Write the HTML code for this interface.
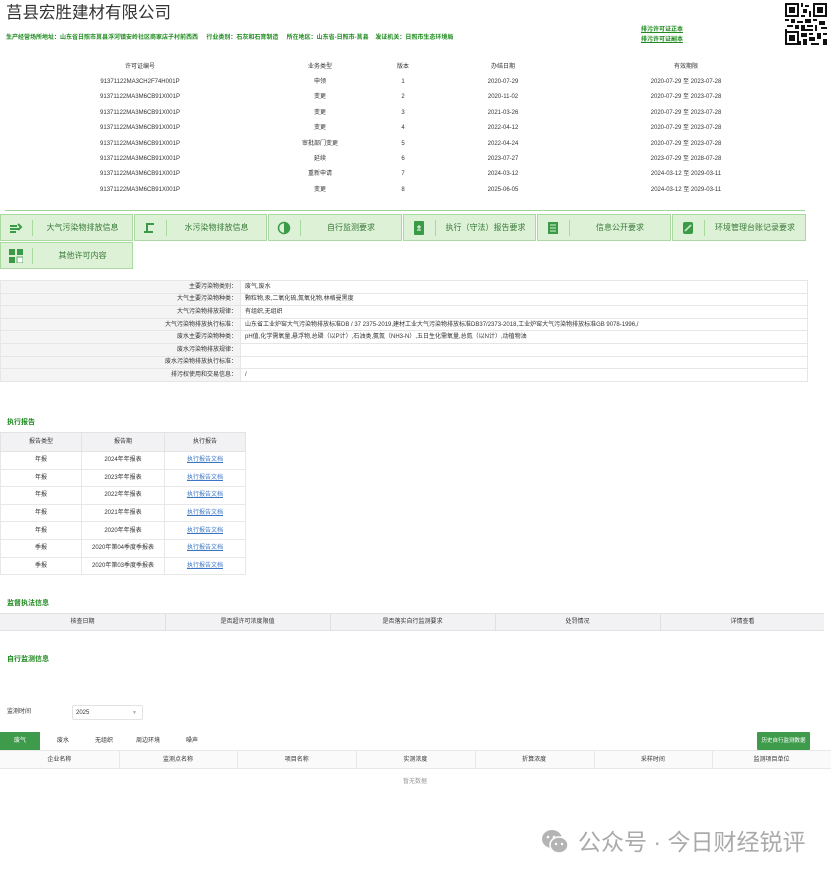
<!DOCTYPE html>
<html><head><meta charset="utf-8">
<style>
*{margin:0;padding:0;box-sizing:border-box}
body{width:831px;height:874px;background:#fff;position:relative;overflow:hidden;font-family:"Liberation Sans","Noto Sans CJK SC",sans-serif;color:#333;font-size:6px}
.a{position:absolute;white-space:nowrap;line-height:8px}
.c{text-align:center}
.g{color:#1f8a1f}
.btn{position:absolute;height:27px;background:#dcf1d6;border:1px solid #a9d9a0;color:#3a7a3a;font-size:8px}
.btn .ic{position:absolute;left:8px;top:6px;width:14px;height:14px}
.btn .dv{position:absolute;left:31px;top:5px;width:1px;height:16px;background:#a9d9a0}
.btn .t{position:absolute;left:32px;right:0;top:0;line-height:25px;text-align:center}
table{border-collapse:collapse;position:absolute}
td{font-size:6px;line-height:8px}
</style></head><body>
<div class="a" style="left:6px;top:3px;font-size:16.5px;line-height:20px;color:#333">莒县宏胜建材有限公司</div>
<div class="a g" style="left:6px;top:34px;font-size:6px;font-weight:bold">生产经营场所地址：山东省日照市莒县浮河镇安岭社区商家店子村前西西&nbsp;&nbsp;&nbsp;&nbsp;&nbsp;行业类别：石灰和石膏制造&nbsp;&nbsp;&nbsp;&nbsp;&nbsp;所在地区：山东省-日照市-莒县&nbsp;&nbsp;&nbsp;&nbsp;发证机关：日照市生态环境局</div>
<div class="a g" style="left:641px;top:26px;font-size:6px;font-weight:bold;text-decoration:underline">排污许可证正本</div>
<div class="a g" style="left:641px;top:36px;font-size:6px;font-weight:bold;text-decoration:underline">排污许可证副本</div>
<svg class="a" style="left:785px;top:3px" width="42" height="42" viewBox="0 0 21 21">
<rect width="21" height="21" fill="#fff"/>
<g fill="#111"><path d="M0 0h7v7H0zM14 0h7v7h-7zM0 14h7v7H0z"/></g>
<g fill="#fff"><path d="M1 1h5v5H1zM15 1h5v5h-5zM1 15h5v5H1z"/></g>
<g fill="#111"><path d="M2 2h3v3H2zM16 2h3v3h-3zM2 16h3v3H2z"/>
<path d="M8 0h1v2H8zM10 1h2v1h-2zM9 3h2v2H9zM12 4h1v3h-1zM8 6h2v1H8zM0 8h2v1H0zM3 8h2v2H3zM6 9h3v1H6zM10 8h3v2h-3zM14 8h2v1h-2zM17 9h3v2h-3zM1 11h3v1H1zM5 11h2v2H5zM8 11h2v3H8zM11 11h3v1h-3zM15 11h1v3h-1zM18 12h3v1h-3zM0 13h1v1H0zM10 13h4v1h-4zM8 15h3v2H8zM12 15h2v1h-2zM16 15h2v3h-2zM19 15h2v1h-2zM9 18h2v3H9zM12 17h3v2h-3zM19 18h2v3h-2zM13 20h4v1h-4zM7 19h1v2H7z"/></g>
</svg>

<div class="a c" style="left:90px;top:63px;width:100px">许可证编号</div>
<div class="a c" style="left:290px;top:63px;width:60px">业务类型</div>
<div class="a c" style="left:383px;top:63px;width:40px">版本</div>
<div class="a c" style="left:463px;top:63px;width:80px">办结日期</div>
<div class="a c" style="left:626px;top:63px;width:120px">有效期限</div>
<div id="rows"></div>

<div class="a" style="left:5px;top:210px;width:800px;height:1px;background:#9fd49a"></div>

<div class="btn" style="left:0;top:214px;width:133px"><svg class="ic" viewBox="0 0 14 14"><path d="M1 5h7M1 8h9M1 11h6M9 3l3 3-3 3" stroke="#3a9a48" stroke-width="2" fill="none"/></svg><div class="dv"></div><div class="t">大气污染物排放信息</div></div>
<div class="btn" style="left:134px;top:214px;width:133px"><svg class="ic" viewBox="0 0 14 14"><path d="M4 11V3h7M1 11h9" stroke="#3a9a48" stroke-width="2" fill="none"/></svg><div class="dv"></div><div class="t">水污染物排放信息</div></div>
<div class="btn" style="left:268px;top:214px;width:134px"><svg class="ic" viewBox="0 0 14 14"><circle cx="7" cy="7" r="5.5" stroke="#3a9a48" stroke-width="1.5" fill="none"/><path d="M7 2a5 5 0 0 1 0 10z" fill="#3a9a48"/></svg><div class="dv"></div><div class="t">自行监测要求</div></div>
<div class="btn" style="left:403px;top:214px;width:133px"><svg class="ic" viewBox="0 0 14 14"><rect x="2" y="0" width="10" height="14" rx="1" fill="#3a9a48"/><path d="M5 6h4M5 9h4M7 4v4" stroke="#dcf1d6" stroke-width="1.2"/></svg><div class="dv"></div><div class="t">执行（守法）报告要求</div></div>
<div class="btn" style="left:537px;top:214px;width:134px"><svg class="ic" viewBox="0 0 14 14"><rect x="2" y="1" width="10" height="12" fill="#3a9a48"/><path d="M4 4h6M4 7h6M4 10h6" stroke="#dcf1d6" stroke-width="1"/></svg><div class="dv"></div><div class="t">信息公开要求</div></div>
<div class="btn" style="left:672px;top:214px;width:134px"><svg class="ic" viewBox="0 0 14 14"><rect x="2" y="1" width="10" height="12" rx="2" fill="#3a9a48"/><path d="M4 10l6-6" stroke="#dcf1d6" stroke-width="1.5"/></svg><div class="dv"></div><div class="t">环境管理台账记录要求</div></div>
<div class="btn" style="left:0;top:242px;width:133px"><svg class="ic" viewBox="0 0 14 14"><rect x="0" y="0" width="6" height="6" fill="#3a9a48"/><rect x="8" y="0" width="6" height="6" fill="#3a9a48"/><rect x="0" y="8" width="6" height="6" fill="#3a9a48"/><rect x="8" y="8" width="6" height="6" fill="#fff" stroke="#3a9a48" stroke-width=".8"/></svg><div class="dv"></div><div class="t">其他许可内容</div></div>

<table style="left:0;top:280px;width:808px;border:1px solid #e3e3e3"><tbody id="info"></tbody></table>

<div class="a g" style="left:7px;top:419px;font-size:7px;font-weight:bold">执行报告</div>
<table style="left:0;top:432px;width:246px;border:1px solid #e3e3e3"><tbody id="rep"></tbody></table>

<div class="a g" style="left:7px;top:600px;font-size:7px;font-weight:bold">监督执法信息</div>
<div class="a" style="left:0;top:613px;width:824px;height:18px;background:#f2f2f4;border-top:1px solid #e3e3e3;border-bottom:1px solid #e3e3e3"></div>
<div id="sup"></div>

<div class="a g" style="left:7px;top:656px;font-size:7px;font-weight:bold">自行监测信息</div>
<div class="a" style="left:7px;top:708px">监测时间</div>
<div class="a" style="left:72px;top:705px;width:71px;height:15px;border:1px solid #e3e3e3;border-radius:2px;padding:3px 3px;font-size:6px">2025<span style="position:absolute;right:5px;top:3px;color:#aaa;font-size:5px">▼</span></div>
<div class="a" style="left:0;top:732px;width:40px;height:18px;background:#3f9b4c;color:#fff;line-height:18px;text-align:center">废气</div>
<div class="a" style="left:57px;top:737px">废水</div>
<div class="a" style="left:95px;top:737px">无组织</div>
<div class="a" style="left:136px;top:737px">周边环境</div>
<div class="a" style="left:186px;top:737px">噪声</div>
<div class="a" style="left:757px;top:732px;width:53px;height:18px;background:#3f9b4c;color:#fff;line-height:18px;text-align:center;border-radius:1px;font-size:5.5px">历史自行监测数据</div>
<div class="a" style="left:0;top:750px;width:831px;height:19px;background:#fafafa;border-top:1px solid #e8e8e8;border-bottom:1px solid #e8e8e8"></div>
<div id="mon"></div>
<div class="a c" style="left:380px;top:778px;width:70px;color:#999">暂无数据</div>

<div class="a" style="left:541px;top:829px;width:28px;height:26px">
<svg width="28" height="26" viewBox="0 0 28 26"><ellipse cx="11" cy="10" rx="10" ry="9" fill="#b4b4b4"/><ellipse cx="18" cy="16" rx="9" ry="8" fill="#b4b4b4" stroke="#fff" stroke-width="1.5"/><circle cx="7" cy="8" r="1.3" fill="#fff"/><circle cx="13" cy="8" r="1.3" fill="#fff"/><circle cx="15" cy="15" r="1.2" fill="#fff"/><circle cx="21" cy="15" r="1.2" fill="#fff"/></svg></div>
<div class="a" style="left:578px;top:829px;font-size:23px;line-height:26px;color:#aaa">公众号 · 今日财经锐评</div>

<script>
var r=[["91371122MA3CH2F74H001P","申领","1","2020-07-29","2020-07-29 至 2023-07-28"],
["91371122MA3M6CB91X001P","变更","2","2020-11-02","2020-07-29 至 2023-07-28"],
["91371122MA3M6CB91X001P","变更","3","2021-03-26","2020-07-29 至 2023-07-28"],
["91371122MA3M6CB91X001P","变更","4","2022-04-12","2020-07-29 至 2023-07-28"],
["91371122MA3M6CB91X001P","审批部门变更","5","2022-04-24","2020-07-29 至 2023-07-28"],
["91371122MA3M6CB91X001P","延续","6","2023-07-27","2023-07-29 至 2028-07-28"],
["91371122MA3M6CB91X001P","重新申请","7","2024-03-12","2024-03-12 至 2029-03-11"],
["91371122MA3M6CB91X001P","变更","8","2025-06-05","2024-03-12 至 2029-03-11"]];
var L=[[90,100],[290,60],[383,40],[463,80],[626,120]],h="";
r.forEach(function(x,i){var t=78+i*15.4;x.forEach(function(v,j){h+='<div class="a c" style="left:'+L[j][0]+'px;top:'+t+'px;width:'+L[j][1]+'px">'+v+'</div>'})});
document.getElementById("rows").innerHTML=h;
var inf=[["主要污染物类别：","废气,废水"],["大气主要污染物种类：","颗粒物,汞,二氧化硫,氮氧化物,林格曼黑度"],["大气污染物排放规律：","有组织,无组织"],["大气污染物排放执行标准：","山东省工业炉窑大气污染物排放标准DB / 37 2375-2019,建材工业大气污染物排放标准DB37/2373-2018,工业炉窑大气污染物排放标准GB 9078-1996,/"],["废水主要污染物种类：","pH值,化学需氧量,悬浮物,总磷（以P计）,石油类,氨氮（NH3-N）,五日生化需氧量,总氮（以N计）,动植物油"],["废水污染物排放规律：",""],["废水污染物排放执行标准：",""],["排污权使用和交易信息：","/"]];
h="";inf.forEach(function(x){h+='<tr style="height:12.6px"><td style="width:240px;background:#f4f4f4;text-align:right;padding-right:3px;border:1px solid #e6e6e6">'+x[0]+'</td><td style="padding-left:4px;border:1px solid #e6e6e6">'+x[1]+'</td></tr>'});
document.getElementById("info").innerHTML=h;
var rp=[["年报","2024年年报表"],["年报","2023年年报表"],["年报","2022年年报表"],["年报","2021年年报表"],["年报","2020年年报表"],["季报","2020年第04季度季报表"],["季报","2020年第03季度季报表"]];
h='<tr style="height:19px;background:#f2f2f4"><td class="c" style="width:81px;border:1px solid #e3e3e3">报告类型</td><td class="c" style="width:83px;border:1px solid #e3e3e3">报告期</td><td class="c" style="border:1px solid #e3e3e3">执行报告</td></tr>';
rp.forEach(function(x){h+='<tr style="height:17.6px"><td class="c" style="border:1px solid #e8e8e8">'+x[0]+'</td><td class="c" style="border:1px solid #e8e8e8">'+x[1]+'</td><td class="c" style="border:1px solid #e8e8e8;color:#3a75c4;text-decoration:underline">执行报告文档</td></tr>'});
document.getElementById("rep").innerHTML=h;
var s=["核查日期","是否超许可浓度限值","是否落实自行监测要求","处罚情况","详情查看"];h="";
s.forEach(function(v,i){h+='<div class="a c" style="left:'+(i*165)+'px;top:618px;width:165px">'+v+'</div>';if(i)h+='<div class="a" style="left:'+(i*165)+'px;top:614px;width:1px;height:17px;background:#e0e0e0"></div>'});
document.getElementById("sup").innerHTML=h;
var m=["企业名称","监测点名称","项目名称","实测浓度","折算浓度","采样时间","监测项目单位"];h="";
m.forEach(function(v,i){h+='<div class="a c" style="left:'+(i*118.7)+'px;top:756px;width:118.7px">'+v+'</div>';if(i)h+='<div class="a" style="left:'+(i*118.7)+'px;top:751px;width:1px;height:18px;background:#e8e8e8"></div>'});
document.getElementById("mon").innerHTML=h;
</script>
</body></html>
